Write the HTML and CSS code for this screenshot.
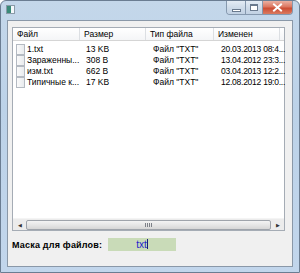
FILE: index.html
```html
<!DOCTYPE html>
<html lang="ru">
<head>
  <meta charset="UTF-8">
  <title>Файлы</title>
  <link rel="stylesheet" href="styles.css">
</head>
<body>
  <div class="ventana">
    <div class="titulo">
      <svg class="icono-app" width="9" height="9" viewBox="0 0 9 9">
        <rect x="0.5" y="0.5" width="8" height="8" fill="#e8eef4" stroke="#8a9aa8"/>
        <rect x="1" y="1" width="4" height="7" fill="#3a8a78"/>
        <rect x="5" y="1" width="3" height="7" fill="#f4f8fb"/>
      </svg>
      <div class="botones">
        <div class="boton min"><span class="raya"></span></div>
        <div class="boton max"><span class="cuadro"></span></div>
        <div class="boton cerrar">
          <svg width="11" height="9" viewBox="0 0 11 9">
            <path d="M2 1.5 L9 7.5 M9 1.5 L2 7.5" stroke="#fff" stroke-width="2" stroke-linecap="square"/>
          </svg>
        </div>
      </div>
    </div>
    <div class="cliente">
      <div class="lista">
        <div class="cabecera">
          <div class="col c1">Файл</div>
          <div class="col c2">Размер</div>
          <div class="col c3">Тип файла</div>
          <div class="col c4">Изменен</div>
          <div class="col resto"></div>
        </div>
        <div class="filas">
          <div class="fila">
            <div class="c1"><span class="doc"></span><span class="txt">1.txt</span></div>
            <div class="c2">13 KB</div>
            <div class="c3">Файл "TXT"</div>
            <div class="c4">20.03.2013 08:4...</div>
          </div>
          <div class="fila">
            <div class="c1"><span class="doc"></span><span class="txt">Зараженны...</span></div>
            <div class="c2">308 B</div>
            <div class="c3">Файл "TXT"</div>
            <div class="c4">13.04.2012 23:3...</div>
          </div>
          <div class="fila">
            <div class="c1"><span class="doc"></span><span class="txt">изм.txt</span></div>
            <div class="c2">662 B</div>
            <div class="c3">Файл "TXT"</div>
            <div class="c4">03.04.2013 12:2...</div>
          </div>
          <div class="fila">
            <div class="c1"><span class="doc"></span><span class="txt">Типичные к...</span></div>
            <div class="c2">17 KB</div>
            <div class="c3">Файл "TXT"</div>
            <div class="c4">12.08.2012 19:0...</div>
          </div>
        </div>
        <div class="scroll">
          <div class="flecha">&#9664;</div>
          <div class="pulgar"><span class="agarre"></span></div>
          <div class="flecha">&#9654;</div>
        </div>
      </div>
      <div class="mascara">
        <label class="etiqueta">Маска для файлов:</label>
        <div class="campo">txt<span class="cursor"></span></div>
      </div>
    </div>
  </div>
</body>
</html>
```

FILE: styles.css
```css
body {
  margin: 0;
  padding: 0;
  font-family: "Liberation Sans", Arial, sans-serif;
  background: #fff;
}

.ventana {
  width: 300px;
  height: 273px;
  box-sizing: border-box;
  background: linear-gradient(to bottom, #c4d7ea 0%, #bcd2e8 40%, #c2d6ec 100%);
  border: 1px solid #6b7d92;
  border-radius: 6px 6px 0 0;
  display: flex;
  flex-direction: column;
  overflow: hidden;
}

.titulo {
  height: 19px;
  display: flex;
  justify-content: space-between;
  align-items: flex-start;
}

.icono-app {
  margin: 4px 0 0 5px;
}

.botones {
  display: flex;
  margin-right: 6px;
  border: 1px solid #8598ae;
  border-top: none;
  border-radius: 0 0 4px 4px;
  overflow: hidden;
  height: 13px;
}

.boton {
  display: flex;
  justify-content: center;
  align-items: center;
  background: linear-gradient(to bottom, #e4ecf5 0%, #cfdcea 50%, #c1d1e3 100%);
}

.min {
  width: 18px;
  border-right: 1px solid #8598ae;
}

.max {
  width: 16px;
  border-right: 1px solid #8598ae;
}

.cerrar {
  width: 29px;
  background: linear-gradient(to bottom, #eab0a2 0%, #dc7660 45%, #cc4d34 55%, #da7a60 100%);
}

.raya {
  width: 7px;
  height: 1px;
  margin-top: 5px;
  background: #fff;
  border: 1px solid #6a7a8e;
}

.cuadro {
  width: 6px;
  height: 4px;
  border: 1px solid #6a7a8e;
  border-top-width: 2px;
  background: #fff;
}

.cliente {
  flex: 1;
  margin: 0 6px 5px 6px;
  background: #f0f0f0;
  border: 1px solid #8a98a8;
  display: flex;
  flex-direction: column;
}

.lista {
  margin: 6px 7px 0 4px;
  height: 202px;
  background: #fff;
  border: 1px solid #a5acb5;
  display: flex;
  flex-direction: column;
  font-size: 8.5px;
  color: #000;
}

.cabecera {
  display: flex;
  height: 12px;
  border-bottom: 1px solid #d5d5d5;
  background: linear-gradient(to bottom, #ffffff 0%, #f4f5f7 100%);
}

.cabecera .col {
  box-sizing: border-box;
  border-right: 1px solid #dcdfe3;
  padding-left: 4px;
  line-height: 12px;
  white-space: nowrap;
}

.cabecera .resto {
  flex: 1;
  border-right: none;
}

.c1 { width: 68px; }
.c2 { width: 67px; }
.c3 { width: 69px; }
.c4 { width: 67px; }

.filas {
  flex: 1;
  padding-top: 3px;
}

.fila {
  display: flex;
  height: 11px;
  line-height: 11px;
  white-space: nowrap;
}

.fila div {
  box-sizing: border-box;
  padding-left: 5px;
  overflow: hidden;
}

.fila .c1 {
  display: flex;
  align-items: center;
  padding-left: 3px;
}

.fila .c4 {
  flex: 1;
  padding-left: 4px;
  letter-spacing: -0.25px;
  overflow: visible;
}

.doc {
  width: 7px;
  height: 9px;
  border: 1px solid #b4bac2;
  background: linear-gradient(to right, #fafafa, #e8ebee);
  margin-right: 2px;
  flex: none;
}

.scroll {
  height: 11px;
  display: flex;
  align-items: center;
  background: #ececec;
  border-top: 1px solid #f4f4f4;
}

.flecha {
  width: 13px;
  font-size: 5px;
  color: #333;
  text-align: center;
}

.pulgar {
  flex: 1;
  height: 8px;
  border: 1px solid #9fa4ab;
  border-radius: 2px;
  background: linear-gradient(to bottom, #f4f4f4 0%, #e6e6e6 50%, #d6d6d6 100%);
  display: flex;
  justify-content: center;
  align-items: center;
}

.agarre {
  width: 7px;
  height: 4px;
  background: repeating-linear-gradient(to right, #7d8188 0 1px, transparent 1px 2px);
}

.mascara {
  display: flex;
  align-items: center;
  margin: 7px 0 0 4px;
}

.etiqueta {
  font-weight: bold;
  font-size: 9px;
  letter-spacing: 0.2px;
  width: 96px;
  white-space: nowrap;
}

.campo {
  width: 68px;
  height: 13px;
  background: #c9dbb8;
  color: #1c1ccc;
  font-size: 10px;
  line-height: 13px;
  text-align: center;
}

.cursor {
  display: inline-block;
  width: 1px;
  height: 10px;
  background: #1a1a80;
  vertical-align: -1px;
}
```
